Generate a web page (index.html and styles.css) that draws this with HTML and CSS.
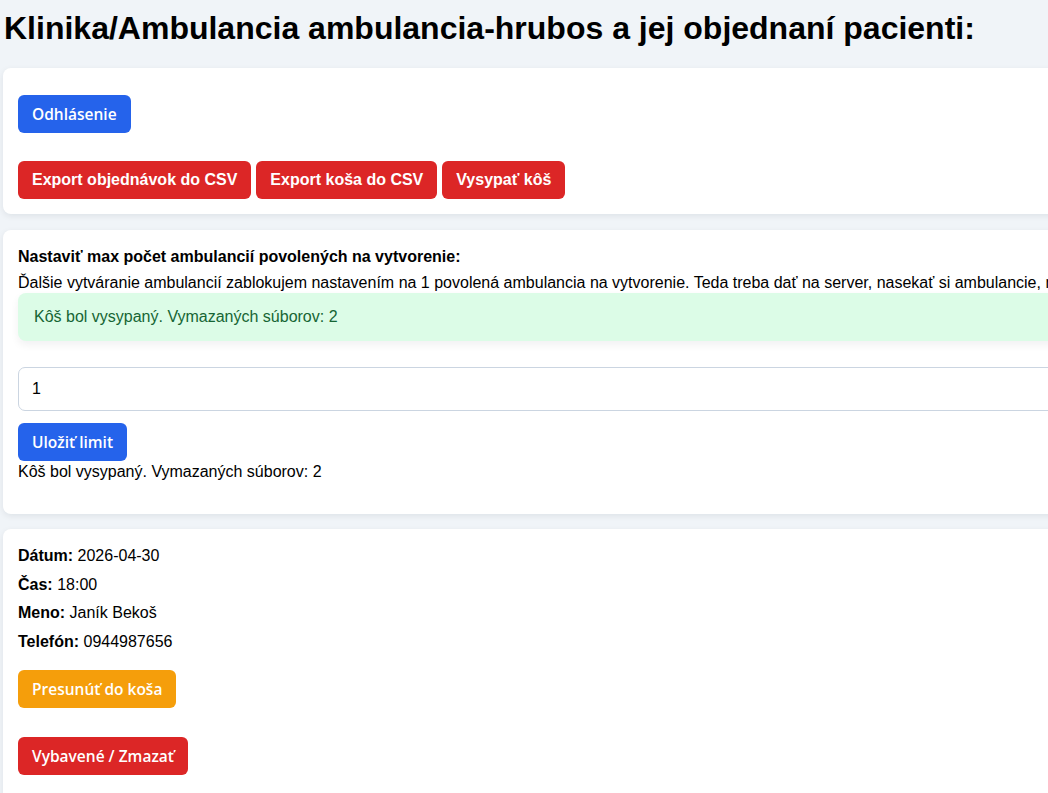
FILE: index.html
```html
<!DOCTYPE html>
<html lang="sk">
<head>
<meta charset="utf-8">
<title>Klinika</title>
<link rel="stylesheet" href="styles.css">
</head>
<body>
<div class="page">
  <h1 class="title">Klinika/Ambulancia ambulancia-hrubos a jej objednaní pacienti:</h1>

  <section class="card card-top">
    <div class="row row-first">
      <button class="btn btn-blue">Odhlásenie</button>
    </div>
    <div class="row row-exports">
      <a class="btn btn-red btn-link">Export objednávok do CSV</a>
      <a class="btn btn-red btn-link">Export koša do CSV</a>
      <a class="btn btn-red btn-link">Vysypať kôš</a>
    </div>
  </section>

  <section class="card card-limit">
    <div class="limit-title">Nastaviť max počet ambulancií povolených na vytvorenie:</div>
    <div class="limit-desc">Ďalšie vytváranie ambulancií zablokujem nastavením na 1 povolená ambulancia na vytvorenie. Teda treba dať na server, nasekať si ambulancie, nastaviť limit a potom už nikto ďalší ambulanciu nevytvorí.</div>
    <div class="alert">Kôš bol vysypaný. Vymazaných súborov: 2</div>
    <input class="limit-input" type="number" value="1">
    <button class="btn btn-blue">Uložiť limit</button>
    <div class="limit-msg">Kôš bol vysypaný. Vymazaných súborov: 2</div>
  </section>

  <section class="card card-order">
    <p class="field"><b>Dátum:</b> 2026-04-30</p>
    <p class="field"><b>Čas:</b> 18:00</p>
    <p class="field"><b>Meno:</b> Janík Bekoš</p>
    <p class="field"><b>Telefón:</b> 0944987656</p>
    <div class="order-actions">
      <button class="btn btn-orange">Presunúť do koša</button>
      <button class="btn btn-red">Vybavené / Zmazať</button>
    </div>
  </section>
</div>
</body>
</html>
```

FILE: styles.css
```css
html {
  overflow: hidden;
}

body {
  margin: 0;
  background: #f0f4f8;
  font-family: "Liberation Sans", Arial, sans-serif;
  font-size: 16px;
  color: #000;
}

.page {
  width: 1400px;
  padding: 0 3px;
}

.title {
  margin: 10px 0 21px;
  padding-left: 1px;
  font-size: 32px;
  line-height: 37px;
  font-weight: bold;
  color: #000;
}

.card {
  background: #fff;
  border-radius: 8px;
  box-shadow: 0 2px 6px rgba(15, 23, 42, 0.08);
  padding: 15px;
  margin-bottom: 15px;
}

.card-top {
  padding-top: 27px;
  margin-bottom: 16px;
}

.row-exports {
  margin-top: 28px;
  display: flex;
  gap: 5px;
}

.btn {
  display: inline-block;
  border: none;
  border-radius: 6px;
  padding: 10px 14px;
  font-family: "Open Sans", "Noto Sans", sans-serif;
  font-size: 15.5px;
  font-weight: 600;
  line-height: 18px;
  color: #fff;
  cursor: pointer;
  text-decoration: none;
}

.btn-link {
  font-family: "Liberation Sans", Arial, sans-serif;
  font-size: 16px;
  font-weight: bold;
}

.btn-blue {
  background: #2563eb;
}

.btn-red {
  background: #dc2626;
}

.btn-orange {
  background: #f59e0b;
}

.card-limit {
  padding-top: 18px;
  padding-bottom: 33px;
}

.limit-title {
  font-weight: bold;
  line-height: 18px;
}

.limit-desc {
  margin-top: 8px;
  line-height: 18px;
  white-space: nowrap;
}

.alert {
  margin-top: 1px;
  background: #dcfce7;
  color: #166534;
  border-radius: 8px;
  padding: 15px 16px;
  line-height: 18px;
  box-shadow: 0 4px 8px rgba(15, 23, 42, 0.06);
}

.limit-input {
  display: block;
  box-sizing: border-box;
  width: 100%;
  height: 44px;
  margin-top: 26px;
  padding: 0 13px;
  border: 1px solid #cbd5e1;
  border-radius: 7px;
  font-family: "Liberation Sans", Arial, sans-serif;
  font-size: 16px;
  color: #000;
  background: #fff;
}

.card-limit .btn {
  margin-top: 12px;
}

.limit-msg {
  margin-top: 2px;
  line-height: 18px;
}

.card-order {
  padding-top: 18px;
  padding-bottom: 40px;
}

.field {
  margin: 0 0 10px;
  line-height: 18.5px;
}

.field b {
  font-weight: bold;
}

.order-actions {
  display: flex;
  flex-direction: column;
  align-items: flex-start;
  gap: 29px;
  margin-top: 19px;
}
```
